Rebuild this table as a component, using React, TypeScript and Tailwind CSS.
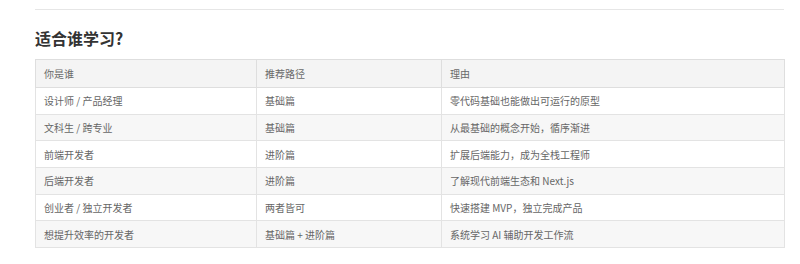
const ROWS: Array<[string, string, string]> = [
  ['设计师 / 产品经理', '基础篇', '零代码基础也能做出可运行的原型'],
  ['文科生 / 跨专业', '基础篇', '从最基础的概念开始，循序渐进'],
  ['前端开发者', '进阶篇', '扩展后端能力，成为全栈工程师'],
  ['后端开发者', '进阶篇', '了解现代前端生态和 Next.js'],
  ['创业者 / 独立开发者', '两者皆可', '快速搭建 MVP，独立完成产品'],
  ['想提升效率的开发者', '基础篇 + 进阶篇', '系统学习 AI 辅助开发工作流'],
];

export default function App() {
  return (
    <div
      className="h-[264px] w-[800px] overflow-hidden bg-white pl-[35px] pr-[16px] pt-[9px]"
      style={{ fontFamily: '"Noto Sans CJK SC", "Liberation Sans", sans-serif' }}
    >
      <hr className="border-t border-[#e6e6e6]" />
      <h2 className="mt-[17px] text-[16px] font-bold leading-[22px] text-[#333]">适合谁学习?</h2>
      <table className="mt-[10px] w-[750px] border-collapse text-[10px] text-[#666]">
        <colgroup>
          <col className="w-[221px]" />
          <col className="w-[185px]" />
          <col />
        </colgroup>
        <thead>
          <tr className="h-[28px] bg-[#f4f4f4]">
            <th className="border border-[#dedede] px-[8px] text-left font-normal text-[#6a6a6a]">你是谁</th>
            <th className="border border-[#dedede] px-[8px] text-left font-normal text-[#6a6a6a]">推荐路径</th>
            <th className="border border-[#dedede] px-[8px] text-left font-normal text-[#6a6a6a]">理由</th>
          </tr>
        </thead>
        <tbody>
          {ROWS.map(([who, path, why], i) => (
            <tr key={who} className={`h-[26.7px] ${i % 2 === 1 ? 'bg-[#f7f7f7]' : 'bg-white'}`}>
              <td className="border border-[#e3e3e3] px-[8px]">{who}</td>
              <td className="border border-[#e3e3e3] px-[8px]">{path}</td>
              <td className="border border-[#e3e3e3] px-[8px]">{why}</td>
            </tr>
          ))}
        </tbody>
      </table>
    </div>
  );
}
